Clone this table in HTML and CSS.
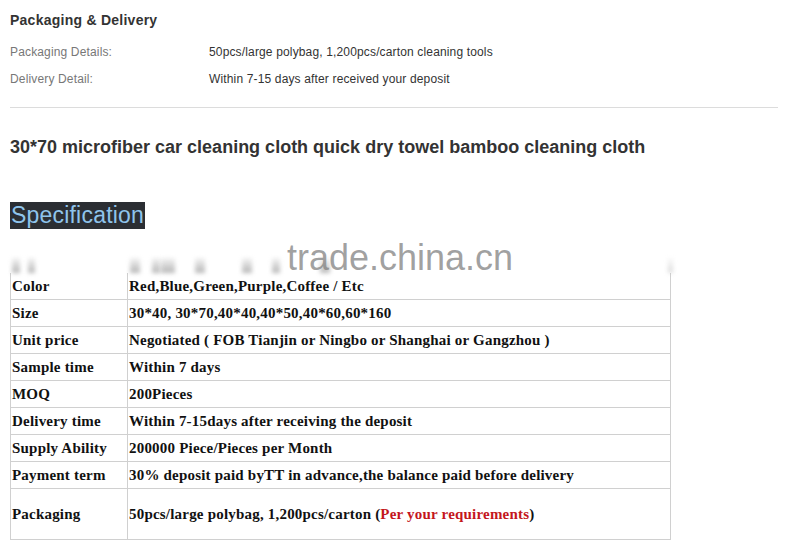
FILE: index.html
```html
<!DOCTYPE html>
<html>
<head>
<meta charset="utf-8">
<link rel="stylesheet" href="styles.css">
</head>
<body>
<div class="page">
  <h2 class="sec-title">Packaging &amp; Delivery</h2>
  <div class="details">
    <div class="drow"><span class="dlabel">Packaging Details:</span><span class="dval">50pcs/large polybag, 1,200pcs/carton cleaning tools</span></div>
    <div class="drow"><span class="dlabel">Delivery Detail:</span><span class="dval">Within 7-15 days after received your deposit</span></div>
  </div>
  <div class="rule"></div>
  <h1 class="prod-title">30*70 microfiber car cleaning cloth quick dry towel bamboo cleaning cloth</h1>
  <div class="spec-wrap"><span class="spec">Specification</span></div>
  <div class="pic">
    <div class="smudges">
      <i class="sm s1"></i><i class="sm s2"></i><i class="sm s3"></i><i class="sm s4"></i><i class="sm s5"></i><i class="sm s6"></i><i class="sm s7"></i><i class="sm s8"></i><i class="sm s9"></i><i class="sm s10"></i>
    </div>
    <table class="spec-table">
      <tr><td class="k">Color</td><td>Red,Blue,Green,Purple,Coffee / Etc</td></tr>
      <tr><td class="k">Size</td><td>30*40, 30*70,40*40,40*50,40*60,60*160</td></tr>
      <tr><td class="k">Unit price</td><td>Negotiated ( FOB Tianjin or Ningbo or Shanghai or Gangzhou )</td></tr>
      <tr><td class="k">Sample time</td><td>Within 7 days</td></tr>
      <tr><td class="k">MOQ</td><td>200Pieces</td></tr>
      <tr><td class="k">Delivery time</td><td>Within 7-15days after receiving the deposit</td></tr>
      <tr><td class="k">Supply Ability</td><td>200000 Piece/Pieces per Month</td></tr>
      <tr><td class="k">Payment term</td><td>30% deposit paid byTT in advance,the balance paid before delivery</td></tr>
      <tr class="tall"><td class="k">Packaging</td><td>50pcs/large polybag, 1,200pcs/carton (<span class="red">Per your requirements</span>)</td></tr>
    </table>
    <div class="watermark">trade.china.cn</div>
  </div>
</div>
</body>
</html>
```
FILE: styles.css
```css
html, body {
  margin: 0;
  padding: 0;
  background: #fff;
}
.page {
  padding: 10px 22px 0 10px;
  font-family: "Liberation Sans", Arial, sans-serif;
}
.sec-title {
  margin: 0;
  font-size: 14px;
  line-height: 20px;
  letter-spacing: 0.25px;
  font-weight: bold;
  color: #333;
}
.details {
  margin-top: 9px;
}
.drow {
  display: flex;
  height: 27px;
  line-height: 27px;
  font-size: 12px;
  letter-spacing: 0.15px;
}
.dlabel {
  width: 199px;
  color: #777;
}
.dval {
  color: #333;
}
.rule {
  margin-top: 14px;
  height: 1px;
  background: #dcdcdc;
}
.prod-title {
  margin: 27px 0 0;
  font-size: 18px;
  line-height: 24px;
  font-weight: bold;
  color: #333;
}
.spec-wrap {
  margin-top: 43px;
  height: 27px;
}
.spec {
  display: inline-block;
  background: #2b2e33;
  color: #8fc4ec;
  font-size: 23px;
  line-height: 27px;
  letter-spacing: 0.2px;
  padding: 0 1px 0 1px;
}
.pic {
  position: relative;
  margin-top: 29px;
  width: 660px;
}
.smudges {
  position: relative;
  height: 15px;
}
.sm {
  position: absolute;
  top: 0;
  height: 15px;
  background: linear-gradient(to bottom, rgba(150,150,150,0.1), rgba(120,120,120,0.55));
  filter: blur(2px);
}
.s1 { left: 2px; width: 8px; }
.s2 { left: 18px; width: 7px; }
.s3 { left: 120px; width: 10px; }
.s4 { left: 142px; width: 8px; }
.s5 { left: 151px; width: 14px; }
.s6 { left: 185px; width: 10px; }
.s7 { left: 232px; width: 10px; }
.s8 { left: 262px; width: 8px; }
.s9 { left: 310px; width: 10px; }
.s10 { left: 658px; width: 5px; background: linear-gradient(to bottom, rgba(200,200,200,0.1), rgba(180,180,180,0.5)); }
.spec-table {
  border-collapse: collapse;
  width: 661px;
  font-family: "Liberation Serif", "Times New Roman", serif;
  font-weight: bold;
  font-size: 15px;
  letter-spacing: 0.2px;
  color: #111;
}
.spec-table td {
  height: 26px;
  padding: 0 0 0 1px;
  border: 1px solid #d0d0d0;
  vertical-align: middle;
  white-space: nowrap;
}
.spec-table tr:first-child td {
  border-top: none;
}
.spec-table td.k {
  width: 115px;
}
.spec-table tr.tall td {
  height: 50px;
}
.red {
  color: #c4161c;
}
.watermark {
  position: absolute;
  left: 277px;
  top: -20px;
  font-family: "Liberation Sans", Arial, sans-serif;
  font-size: 36px;
  line-height: 40px;
  letter-spacing: 0;
  color: rgba(130,130,130,0.75);
}
```
